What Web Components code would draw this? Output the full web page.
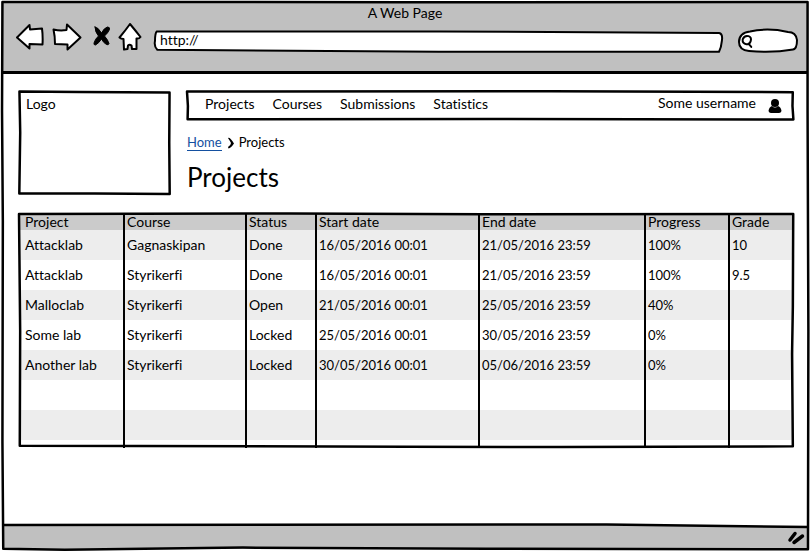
<!DOCTYPE html>
<html lang="en">
<head>
<meta charset="utf-8">
<meta name="viewport" content="width=device-width, initial-scale=1">
<title>A Web Page</title>
<style>
  body { margin: 0; font: 14px/20px Lato, "Open Sans", sans-serif; font-variant-ligatures: none; color: #000; background: #fff; }
</style>
</head>
<body>
<project-page></project-page>

<template id="sketch-frame">
  <style>
    :host { display: block; position: relative; }
    svg { position: absolute; inset: 0; width: 100%; height: 100%; overflow: visible; pointer-events: none; }
    path { fill: none; stroke: #000; stroke-width: 2.5; stroke-linejoin: round; stroke-linecap: round; vector-effect: non-scaling-stroke; }
  </style>
  <slot></slot>
  <svg viewBox="0 0 100 100" preserveAspectRatio="none" aria-hidden="true"><path/></svg>
</template>

<template id="browser-window">
  <style>
    :host { display: block; }
    sketch-frame { display: flex; flex-direction: column; box-sizing: border-box; min-height: 100vh; padding: 2px 2px 3px; }
    header { background: #c0c0c0; border-bottom: 3px solid #000; padding: 1px 10px 18px 14px; }
    .title { text-align: center; line-height: 20px; padding-right: 4px; }
    .bar { display: flex; align-items: flex-end; height: 30px; }
    .tools { display: flex; gap: 8px; align-self: flex-start; margin-right: 13px; }
    button { display: block; border: 0; padding: 0; background: none; height: 28px; }
    button svg { display: block; fill: #fff; stroke: #000; stroke-width: 2; stroke-linejoin: round; stroke-linecap: round; }
    .field { position: relative; display: flex; align-items: center; }
    .field > svg { position: absolute; inset: 0; width: 100%; height: 100%; overflow: visible; fill: #fff; stroke: #000; stroke-width: 2; stroke-linejoin: round; }
    .field > svg path { vector-effect: non-scaling-stroke; }
    .url { flex: 1; height: 22px; margin-right: 15px; }
    .url input { padding-bottom: 4px; padding-left: 5px; }
    .search { width: 60px; height: 24px; }
    input { position: relative; flex: 1; min-width: 0; border: 0; outline: 0; background: none; padding: 0 6px; font: inherit; font-variant-ligatures: none; line-height: 20px; color: inherit; height: 20px; }
    .search .glass { position: relative; inset: auto; width: 13px; height: 15px; margin-left: 3px; fill: none; stroke-linecap: round; }
    main { flex: 1; padding: 17px 14px 24px 17px; }
    footer { position: relative; height: 25px; display: flex; justify-content: flex-end; align-items: center; padding-right: 3px; }
    footer .base { position: absolute; inset: 0; width: 100%; height: 100%; overflow: visible; }
    footer .grip { position: relative; }
  </style>
  <sketch-frame shape="M.3 .35L50 .4 99.7 .35 L99.7 20 99.8 60 99.75 99.5 L60 99.4 30 99.2 8 99.6 .4 99.4 L.3 80 .35 40 .25 20Z">
    <header>
      <div class="title">A Web Page</div>
      <div class="bar">
        <div class="tools">
          <button aria-label="Back"><svg width="28" height="28"><path d="M1 14.5 13.5 2 14 6.5 26 5.5Q27 13 26.5 21.5L13.5 21 13.5 25.5Z"/></svg></button>
          <button aria-label="Forward"><svg width="30" height="28"><path d="M1.5 6.5Q8 8 14.5 7L15 1.5 28.5 14.5 15.5 26.5 15.5 21.5 3 21Q3 13 1.5 6.5Z"/></svg></button>
          <button aria-label="Stop"><svg width="20" height="28"><path stroke-width="1" fill="#000" d="M5 4Q8 4 11.500 10Q14 5 17.500 4Q20 4 19.500 6.500Q18 10 14.500 13Q18 17 19 20.500Q18.500 22.500 16.500 21.500Q13.500 20 11.500 16Q9 20 5.500 22Q3.500 22 4 20Q5 16 8.500 13Q5 9 5 4Z"/></svg></button>
          <button aria-label="Home"><svg width="24" height="28"><path d="M12 1Q17 7 22.500 14Q21 16 18.500 15.500L18.500 26 14 26 13.500 22.500Q11.500 21 10 22.500L9.500 26 6 26.500 5.500 16Q3 16 1.500 14.500Q7 8 12 1Z"/></svg></button>
        </div>
        <div class="field url">
          <svg viewBox="0 0 100 100" preserveAspectRatio="none" aria-hidden="true"><path d="M.3 2L50 2 99.300 9Q100 12 99.800 45Q99.700 75 99.300 94L50 94 .4 85Q-.2 70 0 45Q0 10 .3 2Z"/></svg>
          <input type="text" aria-label="Address" value="http://">
        </div>
        <div class="field search">
          <svg viewBox="0 0 60 24" preserveAspectRatio="none" aria-hidden="true"><path d="M12 2.500Q30-1.500 50 3Q58 3 59 11Q59 20 55 20.500Q35 24 11 22Q1 21 1 13Q1 4 12 2.500Z"/></svg>
          <svg class="glass" viewBox="0 0 12 14" aria-hidden="true"><path d="M5 9.500Q1 9 1.500 5Q3 1 7 2Q10 3 9 6.500Q8 10 5 9.500M7 9L9.500 12"/></svg>
          <input type="search" aria-label="Search">
        </div>
      </div>
    </header>
    <main><slot></slot></main>
    <footer>
      <svg class="base" viewBox="0 0 100 25" preserveAspectRatio="none" aria-hidden="true"><path d="M0 1L75 .5 100 3V25H0Z" fill="#c0c0c0"/><path d="M0 1L75 .5 100 3" fill="none" stroke="#000" stroke-width="2.5" vector-effect="non-scaling-stroke"/></svg>
      <svg class="grip" width="18" height="16" aria-hidden="true"><g stroke="#000" stroke-width="3.500" stroke-linecap="round"><path d="M3 11L8 4.500M7 13.500L15.500 7"/></g></svg>
    </footer>
  </sketch-frame>
</template>

<template id="site-nav">
  <style>
    :host { display: block; }
    nav { display: flex; align-items: center; gap: 18px; height: 26px; padding: 0 12px 4px 18px; }
    a { color: inherit; text-decoration: none; line-height: 24px; }
    .user { display: flex; align-items: center; gap: 12px; margin-left: auto; }
    .user span { padding-bottom: 3px; }
    .user svg { margin-top: 3px; }
  </style>
  <sketch-frame shape="M0 2L60 1 99.800 4 L99.750 50 99.900 95 L50 93 .1 94 L.15 50Z">
    <nav aria-label="Main">
      <a href="#projects">Projects</a><a href="#courses">Courses</a><a href="#submissions">Submissions</a><a href="#statistics">Statistics</a>
      <div class="user"><span>Some username</span>
        <svg width="14" height="16" aria-hidden="true"><circle cx="7" cy="5" r="4"/><path d="M4 8Q7 11 10 8Q13 9 13.500 13Q13 15 11 15H3Q1 15 .5 13Q1 9 4 8Z"/></svg>
      </div>
    </nav>
  </sketch-frame>
</template>

<template id="bread-crumbs">
  <style>
    :host { display: block; font-size: 13px; }
    nav { display: flex; align-items: center; gap: 4px; }
    a { color: #1450a0; text-decoration: none; line-height: 16px; border-bottom: 1px solid #1450a0; }
    svg { margin: 2px 0 0 1px; }
  </style>
  <nav aria-label="Breadcrumb">
    <a href="#home">Home</a>
    <svg width="8" height="12" aria-hidden="true"><path d="M1 1Q3 0 7 6.500Q4 11 1.500 11.500L1 10Q4 8 4 6Q3 4 1 1Z"/></svg>
    <span aria-current="page">Projects</span>
  </nav>
</template>

<template id="project-table">
  <style>
    :host { display: block; }
    table { width: 100%; table-layout: fixed; border-spacing: 0; }
    th, td { padding: 0 0 0 2px; text-align: left; font-weight: 400; white-space: nowrap; border-left: 2px solid #000; }
    th:first-child, td:first-child { padding-left: 6px; border-left: 0; }
    th { height: 17px; line-height: 17px; background: #cbcbcb; }
    td { height: 30px; }
    td:nth-child(n + 4) { font-size: 13px; }
    tbody tr:nth-child(odd) td { background: #ededed; }
    tfoot td { height: 8px; }
  </style>
  <sketch-frame shape="M0 .4L35 .2 60 .5 99.900 .4 L99.850 40 99.750 60 99.850 99.300 L70 99.600 50 99.500 .1 99 L.15 50Z">
    <table aria-label="Projects">
      <colgroup></colgroup><thead></thead><tbody></tbody><tfoot></tfoot>
    </table>
  </sketch-frame>
</template>

<template id="project-page">
  <style>
    :host { display: block; }
    .top { display: grid; grid-template-columns: 151px 1fr; gap: 17px; margin-bottom: 18px; }
    .logo { min-height: 104px; }
    .logo span { display: block; padding: 3px 7px; }
    bread-crumbs { margin-top: 11px; }
    h1 { font-size: 26px; line-height: 32px; font-weight: 400; margin: 9px 0 0; }
  </style>
  <browser-window>
    <div class="top">
      <sketch-frame class="logo" shape="M.3 .5L40 1 99.700 1.500 L99.500 50 99.800 99 L50 98.500 .2 98.500 L.8 40Z"><span>Logo</span></sketch-frame>
      <div>
        <site-nav></site-nav>
        <bread-crumbs></bread-crumbs>
        <h1>Projects</h1>
      </div>
    </div>
    <project-table></project-table>
  </browser-window>
</template>

<script>
  class TemplateElement extends HTMLElement {
    constructor() {
      super();
      this.attachShadow({ mode: "open" })
        .append(document.getElementById(this.localName).content.cloneNode(true));
    }
  }

  customElements.define("sketch-frame", class extends TemplateElement {
    connectedCallback() {
      this.shadowRoot.querySelector("path")
        .setAttribute("d", this.getAttribute("shape") || "M0 0H100V100H0Z");
    }
  });
  customElements.define("browser-window", class extends TemplateElement {});
  customElements.define("site-nav", class extends TemplateElement {});
  customElements.define("bread-crumbs", class extends TemplateElement {});

  const columns = [["Project", 104], ["Course", 122], ["Status", 70], ["Start date", 163],
    ["End date", 166], ["Progress", 84], ["Grade", 66]];
  const projects = [
    ["Attacklab", "Gagnaskipan", "Done", "16/05/2016 00:01", "21/05/2016 23:59", "100%", "10"],
    ["Attacklab", "Styrikerfi", "Done", "16/05/2016 00:01", "21/05/2016 23:59", "100%", "9.5"],
    ["Malloclab", "Styrikerfi", "Open", "21/05/2016 00:01", "25/05/2016 23:59", "40%", ""],
    ["Some lab", "Styrikerfi", "Locked", "25/05/2016 00:01", "30/05/2016 23:59", "0%", ""],
    ["Another lab", "Styrikerfi", "Locked", "30/05/2016 00:01", "05/06/2016 23:59", "0%", ""],
    Array(7).fill(""),
    Array(7).fill("")
  ];

  customElements.define("project-table", class extends TemplateElement {
    connectedCallback() {
      const find = (name) => this.shadowRoot.querySelector(name);
      const row = (cells) => `<tr>${cells.map((text) => `<td>${text}</td>`).join("")}</tr>`;
      find("colgroup").innerHTML = columns.map(([, width]) => `<col style="width:${width}px">`).join("");
      find("thead").innerHTML = `<tr>${columns.map(([name]) => `<th scope="col">${name}</th>`).join("")}</tr>`;
      find("tbody").innerHTML = projects.map(row).join("");
      find("tfoot").innerHTML = row(Array(7).fill(""));
    }
  });
  customElements.define("project-page", class extends TemplateElement {});
</script>
</body>
</html>
